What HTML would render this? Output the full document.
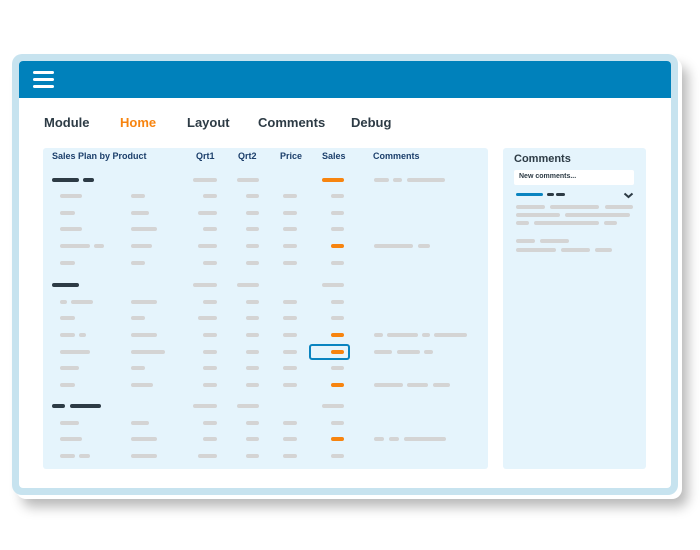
<!DOCTYPE html>
<html><head><meta charset="utf-8"><style>
*{margin:0;padding:0;box-sizing:border-box}
body{width:700px;height:550px;background:#fff;position:relative;overflow:hidden;font-family:"Liberation Sans",sans-serif}
.a{position:absolute}
.b{position:absolute;height:4px;border-radius:2px;background:#d4d4d4}
.o{background:#f7840f}
.d{background:#2d3b45}
.u{background:#0a84c0}
.nav{position:absolute;top:115px;font-size:13px;font-weight:bold;color:#2d3b45}
.h{position:absolute;top:151px;font-size:9px;font-weight:bold;color:#1c3f6b}
</style></head><body>
<div class="a" style="left:16px;top:58px;width:666px;height:441px;border-radius:10px;box-shadow:6px 8px 12px rgba(0,0,0,0.28)"></div>
<div class="a" style="left:12px;top:54px;width:666px;height:441px;border-radius:10px;background:#c7e3ef"></div>
<div class="a" style="left:19px;top:61px;width:652px;height:427px;border-radius:4px;background:#fff"></div>
<div class="a" style="left:19px;top:61px;width:652px;height:37px;border-radius:4px 4px 0 0;background:#0081bb"></div>
<div class="a" style="left:33px;top:71px;width:21px;height:3px;border-radius:2px;background:#fff"></div>
<div class="a" style="left:33px;top:78px;width:21px;height:3px;border-radius:2px;background:#fff"></div>
<div class="a" style="left:33px;top:85px;width:21px;height:3px;border-radius:2px;background:#fff"></div>
<div class="nav" style="left:44px">Module</div>
<div class="nav" style="left:120px;color:#f7840f">Home</div>
<div class="nav" style="left:187px">Layout</div>
<div class="nav" style="left:258px">Comments</div>
<div class="nav" style="left:351px">Debug</div>
<div class="a" style="left:43px;top:148px;width:445px;height:321px;border-radius:3px;background:#e5f4fc"></div>
<div class="a" style="left:503px;top:148px;width:143px;height:321px;border-radius:3px;background:#e5f4fc"></div>
<div class="h" style="left:52px">Sales Plan by Product</div>
<div class="h" style="left:196px">Qrt1</div>
<div class="h" style="left:238px">Qrt2</div>
<div class="h" style="left:280px">Price</div>
<div class="h" style="left:322px">Sales</div>
<div class="h" style="left:373px">Comments</div>
<div class="a" style="left:309px;top:344px;width:41px;height:16px;border:2px solid #0a84c0;border-radius:3px"></div>
<div class="a" style="left:514px;top:153px;font-size:11px;font-weight:bold;color:#2d3b45">Comments</div>
<div class="a" style="left:514px;top:170px;width:120px;height:15px;background:#fff;border-radius:2px;font-size:7px;font-weight:bold;color:#2d3b45;padding:3px 5px">New comments...</div>
<svg class="a" style="left:623px;top:192px" width="11" height="7"><path d="M1.5 1.5 L5.5 5 L9.5 1.5" stroke="#2d3b45" stroke-width="2" fill="none"/></svg>
<div id="c"></div>
<script>
var R=[
[180,[[52,79,'d'],[83,94,'d'],[193,217],[237,259],[322,344,'o'],[374,389],[393,402],[407,445]]],
[196,[[60,82],[131,145],[203,217],[246,259],[283,297],[331,344]]],
[213,[[60,75],[131,149],[198,217],[246,259],[283,297],[331,344]]],
[229,[[60,82],[131,157],[203,217],[246,259],[283,297],[331,344]]],
[246,[[60,90],[94,104],[131,152],[198,217],[246,259],[283,297],[331,344,'o'],[374,413],[418,430]]],
[263,[[60,75],[131,145],[203,217],[246,259],[283,297],[331,344]]],
[285,[[52,79,'d'],[193,217],[237,259],[322,344]]],
[302,[[60,67],[71,93],[131,157],[203,217],[246,259],[283,297],[331,344]]],
[318,[[60,75],[131,145],[198,217],[246,259],[283,297],[331,344]]],
[335,[[60,75],[79,86],[131,157],[203,217],[246,259],[283,297],[331,344,'o'],[374,383],[387,418],[422,430],[434,467]]],
[352,[[60,90],[131,165],[203,217],[246,259],[283,297],[331,344,'o'],[374,392],[397,420],[424,433]]],
[368,[[60,79],[131,145],[203,217],[246,259],[283,297],[331,344]]],
[385,[[60,75],[131,153],[203,217],[246,259],[283,297],[331,344,'o'],[374,403],[407,428],[433,450]]],
[406,[[52,65,'d'],[70,101,'d'],[193,217],[237,259],[322,344]]],
[423,[[60,79],[131,149],[203,217],[246,259],[283,297],[331,344]]],
[439,[[60,82],[131,157],[203,217],[246,259],[283,297],[331,344,'o'],[374,384],[389,399],[404,446]]],
[456,[[60,75],[79,90],[131,157],[198,217],[246,259],[283,297],[331,344]]],
[195,[[516,543,'u'],[547,554,'d'],[556,565,'d']]],
[207,[[516,545],[550,599],[605,633]]],
[215,[[516,560],[565,630]]],
[223,[[516,529],[534,599],[604,617]]],
[241,[[516,535],[540,569]]],
[250,[[516,556],[561,590],[595,612]]]];
var h='';R.forEach(function(r){r[1].forEach(function(b){var cls='b'+(b[2]?' '+b[2]:'');var hh=(b[2]=='u'||b[2]=='d')&&r[0]==195?3:4;h+='<div class="'+cls+'" style="left:'+b[0]+'px;top:'+(r[0]-2)+'px;width:'+(b[1]-b[0])+'px;height:'+hh+'px"></div>';});});
document.getElementById('c').innerHTML=h;
</script>
</body></html>
